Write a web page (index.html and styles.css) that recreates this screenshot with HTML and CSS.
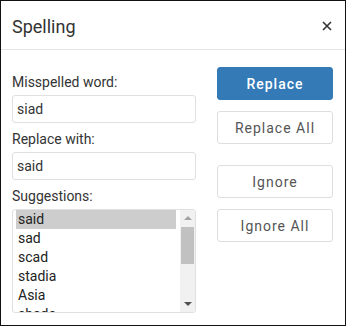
FILE: index.html
```html
<!DOCTYPE html>
<html lang="en">
<head>
    <meta charset="UTF-8">
    <title>Spelling</title>
    <link rel="stylesheet" href="styles.css">
</head>
<body>
    <div class="dialog">
        <div class="head">
            <span class="title">Spelling</span>
            <span class="close">
                <svg width="10" height="10" viewBox="0 0 10 10"><path d="M1 1L9 9M9 1L1 9" stroke="#333" stroke-width="1.6"/></svg>
            </span>
        </div> <!-- head -->
        <div class="body">
            <div class="left">
                <div class="label">Misspelled word:</div>
                <div class="field">siad</div>
                <div class="label">Replace with:</div>
                <div class="field">said</div>
                <div class="label">Suggestions:</div>
                <div class="list">
                    <div class="items">
                        <div class="item sel">said</div>
                        <div class="item">sad</div>
                        <div class="item">scad</div>
                        <div class="item">stadia</div>
                        <div class="item">Asia</div>
                        <div class="item">shade</div>
                    </div>
                    <div class="scroll">
                        <span class="arrow up"></span>
                        <span class="thumb"></span>
                        <span class="arrow down"></span>
                    </div>
                </div>
            </div> <!-- left -->
            <div class="right">
                <button type="button" class="btn primary">Replace</button>
                <button type="button" class="btn">Replace All</button>
                <button type="button" class="btn gap">Ignore</button>
                <button type="button" class="btn">Ignore All</button>
            </div> <!-- right -->
        </div>
    </div>
</body>
</html>
```

FILE: styles.css
```css
body {
    margin: 0;
    font-family: Roboto, "Liberation Sans", sans-serif;
    color: #333;
}

div.dialog {
    width: 344px;
    height: 324px;
    border: 1px solid #111;
    background: white;
    overflow: hidden;
}

div.dialog div.head {
    height: 48px;
    border-bottom: 1px solid #e5e5e5;
    display: flex;
    align-items: center;
    justify-content: space-between;
    padding: 0 13px 0 11px;
}

div.head span.title {
    font-size: 18px;
    padding-top: 2px;
}

div.head span.close {
    display: flex;
    padding-top: 1px;
}

div.dialog div.body {
    display: grid;
    grid-template-columns: 184px 116px;
    column-gap: 21px;
    padding: 17px 0 0 11px;
    align-items: start;
}

div.left {
    padding-top: 6px;
}

div.left div.label {
    font-size: 14px;
    line-height: 18px;
    margin-bottom: 4px;
}

div.left div.field {
    height: 26px;
    border: 1px solid #e0e0e0;
    border-radius: 3px;
    font-size: 14px;
    line-height: 26px;
    padding-left: 4px;
    margin-bottom: 7px;
}

div.left div.list {
    height: 102px;
    border: 1px solid #e0e0e0;
    border-radius: 3px;
    display: flex;
    overflow: hidden;
}

div.list div.items {
    flex: 1;
    padding: 0 4px 0 3px;
}

div.list div.item {
    height: 19px;
    line-height: 19px;
    font-size: 14px;
    padding-left: 2px;
    color: #222;
}

div.list div.item.sel {
    background-color: #cdcdcd;
}

div.list div.scroll {
    width: 15px;
    background-color: #f1f1f1;
    position: relative;
}

div.scroll span.thumb {
    position: absolute;
    left: 1px;
    right: 1px;
    top: 17px;
    height: 37px;
    background-color: #c1c1c1;
}

div.scroll span.arrow {
    position: absolute;
    left: 4px;
    width: 0;
    height: 0;
    border-left: 4px solid transparent;
    border-right: 4px solid transparent;
}

div.scroll span.up {
    top: 6px;
    border-bottom: 4px solid #a3a3a3;
}

div.scroll span.down {
    bottom: 6px;
    border-top: 4px solid #505050;
}

div.right {
    display: flex;
    flex-direction: column;
    gap: 11px;
}

button.btn {
    height: 33px;
    border: 1px solid #dedede;
    border-radius: 3px;
    background: white;
    color: #555;
    font-family: Roboto, "Liberation Sans", sans-serif;
    font-size: 14px;
    letter-spacing: 1px;
    padding: 0;
}

button.btn.primary {
    background-color: #337ab7;
    border-color: #337ab7;
    color: white;
    font-weight: 500;
}

button.btn.gap {
    margin-top: 10px;
}
```
